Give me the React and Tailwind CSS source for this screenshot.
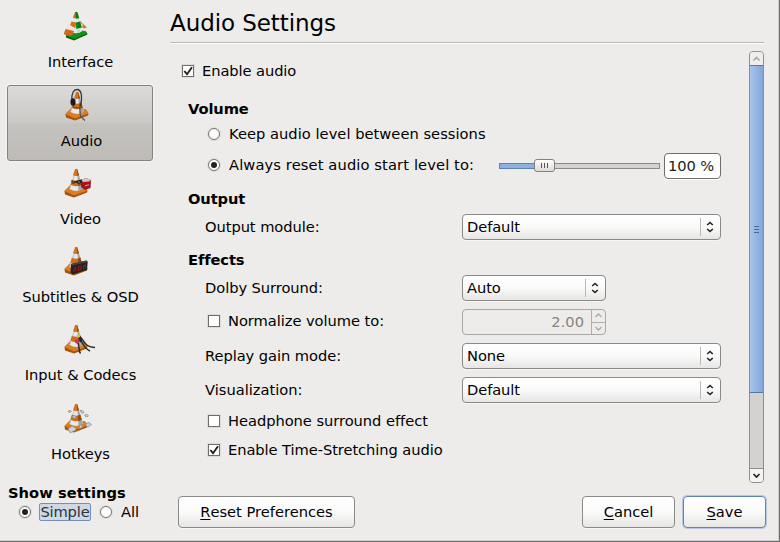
import React from "react";

const raised = "border border-[#8b8a88] rounded-[4px] bg-gradient-to-b from-white via-[#fafafa] to-[#e7e6e4] shadow-[0_1px_0_#f7f6f5]";

function Cone() {
  return (
    <g>
      <path d="M4.500 25 L10 19.500 L25 20.500 L27.500 24.500 L27 26.500 L14 31.500 L5 28.500Z" fill="#a3550c" />
      <path d="M4.500 25 L10 19.500 L25 20.500 L27.500 24.500 L14 29.500Z" fill="#dc7d1f" />
      <path d="M15 3.300 Q16 2.300 17.200 3.300 L23 22.500 Q17 27 9.500 23Z" fill="#e6e8ec" />
      <path d="M17 3.200 L17.200 3.300 L23 22.500 Q21 24.500 18.500 25Z" fill="#a3a6ac" />
      <path d="M14.600 9 L12.200 15 M11 18.500 L9.700 23" stroke="#b3b6bb" strokeWidth=".8" />
      <path d="M15 3.300 Q16 2.300 17.200 3.300 L18.900 9.300 Q16 10.800 13 9.300Z" fill="#cf7420" />
      <path d="M11.900 13.500 Q16 16 20.200 13.500 L21.700 18.700 Q16 21.500 10.300 18.800Z" fill="#cc6d17" />
      <path d="M16.800 3 L17.200 3.300 L18.900 9.300 L17.500 10Z M18 14.800 L20.200 13.500 L21.700 18.700 L18.300 20.200Z" fill="#94490a" />
    </g>
  );
}

function InterfaceIcon() {
  return (
    <>
      <path d="M19 11 L27 18.500 L24 19.500 L20 17Z" fill="#d97734" />
      <path d="M20 13 L23 16 L22 18 L20 17Z" fill="#e9e4df" />
      <path d="M6 26 L15 20 L26 22.500 L27.500 25.500 L14 31.500 L6 28.500Z" fill="#075f0c" />
      <path d="M6 26 L15 20 L26 22.500 L27.500 24.500 L14 30Z" fill="#129119" />
      <path d="M15 3.300 Q16.300 2.300 17.500 3.300 L22.500 22 Q17 26 11 23Z" fill="#e3e7e4" />
      <path d="M15 3.300 L16.200 2.700 L16 9.300 L12.800 8.800Z" fill="#cf7024" />
      <path d="M15.500 2.700 L17.500 3.300 L19.300 9.300 L15.800 9.800Z M16 13.500 L20.200 12.500 L21.800 18.500 L16.300 20Z" fill="#087f12" />
      <path d="M11.500 12.500 L16.200 13.500 L15.500 19 L9.700 17Z" fill="#d66f1b" />
      <path d="M8.500 15 L14 18.500 L14 23 L5.500 22Z" fill="#e9e4e0" />
      <path d="M5.500 20 L14 22 L12.500 26.500 L8 27 L3.800 25Z" fill="#cb681b" />
      <path d="M17.500 20 L19.500 19.500 L20.500 23 L17 24Z" fill="#c9d6ca" />
    </>
  );
}

function AudioIcon() {
  return (
    <>
      <g transform="translate(0 1)"><Cone /></g>
      <path d="M11 13 C10 5 13 1.500 16 1.500 C21 1.500 21.500 10 19.500 18" fill="none" stroke="#34373a" strokeWidth="1.300" />
      <ellipse cx="12" cy="14" rx="2.600" ry="3.800" fill="#171c20" />
      <path d="M12 17.500 C13 22 17 19 18.500 20 C20 22 18 26 20 29 L24 32.500" fill="none" stroke="#4a4b4c" strokeWidth="1.100" />
    </>
  );
}

function VideoIcon() {
  return (
    <>
      <Cone />
      <path d="M21 14 L26 12 L31 14 L30.500 22 L25 24 L21 21Z" fill="#a5121d" />
      <path d="M21 14 L26 12 L31 14 L29 15.500 L23 16Z" fill="#d3c6c8" />
      <path d="M25 19.800 L29 18.800" stroke="#d99aa1" strokeWidth="1.100" />
      <path d="M11 14.500 L15 15 L22 13.500 L22 16.500 L18.500 18 L16 16.500 L13 18Z" fill="#292521" />
      <path d="M12.500 16H14.500 M18 16H20" stroke="#c98022" />
    </>
  );
}

function SubtitlesIcon() {
  return (
    <>
      <Cone />
      <path d="M11 20 L26.500 16.500 L27.700 18 L27 26 L12.500 30.500 L10.500 28.500Z" fill="#242323" />
      <path d="M11 20 L26.500 16.500 L27.700 18 L12 21.500Z" fill="#484545" />
      <path d="M13.500 28 L15 23.500 L16.500 27.200 M18.500 26.500 V22.800 L21 22.200 V25.800 L18.500 26.500 M23.500 25 V21.500 L25.500 21 V24.500" fill="none" stroke="#96191c" strokeWidth="1" />
    </>
  );
}

function CodecsIcon() {
  return (
    <>
      <Cone />
      <path d="M19 14 C24 17 24 25.500 35 25.500 M19 16 C23 20 23 26 30 29 M17.500 20 C20 24 18 28 20.500 31.500" fill="none" stroke="#292729" strokeWidth="1.500" />
      <circle cx="18.500" cy="14" r="1.800" fill="#d7cb16" />
      <circle cx="16.800" cy="19.500" r="1.900" fill="#d6266d" />
      <path d="M19.500 15.500 L21.500 20" stroke="#292729" strokeWidth="2" />
    </>
  );
}

function HotkeysIcon() {
  return (
    <>
      <Cone />
      <g fill="#d0d0cf" stroke="#868684" strokeWidth=".7">
        <path d="M8 10 L10.500 9.500 L11.500 10.500 L9 11.500Z M20 9.500 L22.500 9.500 L24 11.500 L22 12.500Z M24.500 14 L27 13.300 L28.500 15 L26 16Z M12 15.500 L14 14.500 L16.500 16 L14 17.500Z" />
        <path d="M8 28 L12 25 L16 27 L15.500 29.500 L10 31.800Z M19 24.500 L21 24 L23 26 L20 27.500Z M26 22.500 L29 21.500 L31.500 23.500 L28 26 L26 25Z" />
      </g>
    </>
  );
}

function Check({ on }) {
  return (
    <span className="flex size-[12px] shrink-0 border border-[#6e6d6b] bg-white shadow-[0_0_0_1px_#dddcda]">
      {on && (
        <svg className="size-[10px]" viewBox="0 0 10 10">
          <path d="M1.300 5 L4 8.200 L9 1.200" fill="none" stroke="#222" strokeWidth="1.900" />
        </svg>
      )}
    </span>
  );
}

function Radio({ on }) {
  return (
    <span className="flex size-[12px] shrink-0 items-center justify-center rounded-full border border-[#767573] bg-white shadow-[0_0_0_1px_#dddcda]">
      {on && <span className="size-[6px] rounded-full bg-[#222]" />}
    </span>
  );
}

function Select({ value, className }) {
  return (
    <div className={`flex h-[26px] items-center pl-1 ${raised} ${className}`}>
      <span className="flex-1 tracking-[-0.080px]">{value}</span>
      <span className="h-[18px] w-px bg-[#bab9b7]" />
      <svg className="h-[12px] w-[19px]" viewBox="0 0 19 12">
        <path d="M6.200 4 L9 1.500 L11.800 4 M6.200 8 L9 10.500 L11.800 8" fill="none" stroke="#222" strokeWidth="1.600" />
      </svg>
    </div>
  );
}

function Item({ label, icon, active, className = "" }) {
  return (
    <div
      className={`flex h-[76px] w-[146px] shrink-0 flex-col items-center rounded-[3px] border ${active ? "border-[#84837f] bg-[linear-gradient(#dbdad8,#cccac7_49%,#c5c3bf_51%,#bfbcb8)] pl-[2px] shadow-[0_0_0_1px_#f4f3f2]" : "border-transparent"} ${className}`}
    >
      <svg className="mr-[6px] mt-[2px] size-[34px] overflow-visible" viewBox="0 0 34 34">{icon}</svg>
      <span className="mt-[9px] pl-px leading-[20px] tracking-[-0.030px]">{label}</span>
    </div>
  );
}

const Head = ({ children, className }) => (
  <div className={`flex h-6 items-center font-bold tracking-[-0.100px] ${className}`}>{children}</div>
);

export default function App() {
  return (
    <div className="flex h-[542px] w-[780px] overflow-hidden whitespace-nowrap border-b border-r border-[#6f6e6c] bg-[#edecea] font-['DejaVu_Sans',sans-serif] text-[14.670px] leading-[20px] text-black shadow-[inset_-1px_-1px_0_#cfcecc]">
      <aside className="flex w-[170px] shrink-0 flex-col pl-[7px] pt-[6px]">
        <Item label="Interface" icon={<InterfaceIcon />} className="mb-[3px]" />
        <Item label="Audio" icon={<AudioIcon />} active className="mb-[2px]" />
        <Item label="Video" icon={<VideoIcon />} className="mb-[2px]" />
        <Item label="Subtitles & OSD" icon={<SubtitlesIcon />} className="mb-[2px]" />
        <Item label="Input & Codecs" icon={<CodecsIcon />} className="mb-[3px]" />
        <Item label="Hotkeys" icon={<HotkeysIcon />} />
        <div className="mt-[9px] pl-px font-bold tracking-[0.060px]">Show settings</div>
        <div className="flex h-[18px] items-center pl-[12px]">
          <Radio on />
          <span className="ml-[8px] flex h-[18px] w-[52px] items-center justify-center rounded-[2px] border border-[#7390b9] bg-[#d0d8e3] tracking-[-0.150px] text-[#2b3340]">Simple</span>
          <span className="ml-[9px] flex"><Radio /></span>
          <span className="ml-[9px]">All</span>
        </div>
      </aside>

      <main className="flex w-[609px] flex-col">
        <h1 className="flex h-[42px] items-center pt-[4px] text-[23px] tracking-[-0.080px]">Audio Settings</h1>
        <div className="h-[2px] w-[594px] border-b border-t border-b-white border-t-[#b9b8b6]" />
        <div className="flex h-[439px] pt-[7px]">
          <div className="w-[579px] pt-[7px]">
            <div className="flex h-[26px] items-center pl-[12px]">
              <Check on />
              <span className="ml-[8px] tracking-[-0.080px]">Enable audio</span>
            </div>
            <div className="pl-[18px]">
              <Head className="mt-[13px]">Volume</Head>
              <div className="mt-px flex h-6 items-center pl-[20px]">
                <Radio />
                <span className="ml-[9px] tracking-[0.030px]">Keep audio level between sessions</span>
              </div>
              <div className="mt-[6px] flex h-[27px] items-center pl-[20px]">
                <span className="-mt-[2px] flex"><Radio on /></span>
                <span className="-mt-[2px] ml-[9px] w-[270px] tracking-[0.120px]">Always reset audio start level to:</span>
                <div className="flex w-[161px] items-center">
                  <div className="h-[6px] w-[35px] border border-r-0 border-[#5f82b5] bg-[#8db0de]" />
                  <div className="flex h-[13px] w-[21px] items-center justify-center gap-[2px] rounded-[3px] border border-[#82817f] bg-gradient-to-b from-white to-[#dcdbd9]">
                    <i className="h-[5px] w-px bg-[#555]" />
                    <i className="h-[5px] w-px bg-[#555]" />
                    <i className="h-[5px] w-px bg-[#555]" />
                  </div>
                  <div className="h-[6px] flex-1 border border-l-0 border-[#8c8b89] bg-[#d5d3d0]" />
                </div>
                <div className="ml-[4px] flex h-[26px] w-[57px] items-center rounded-[4px] border border-[#716f6d] bg-white pl-[3px] tracking-[-0.100px] text-[#222] shadow-[0_1px_0_#fff]">100 %</div>
              </div>
              <Head className="mt-[8px]">Output</Head>
              <div className="mt-[3px] flex items-center pl-[17px]">
                <span className="w-[257px] tracking-[-0.060px]">Output module:</span>
                <Select value="Default" className="w-[259px]" />
              </div>
              <Head className="mt-[8px]">Effects</Head>
              <div className="mt-[3px] flex items-center pl-[17px]">
                <span className="w-[257px] tracking-[-0.060px]">Dolby Surround:</span>
                <Select value="Auto" className="w-[144px]" />
              </div>
              <div className="mt-[8px] flex items-center pl-[20px]">
                <span className="-mt-[2px] flex"><Check /></span>
                <span className="-mt-[2px] ml-[8px] w-[234px] tracking-[-0.050px]">Normalize volume to:</span>
                <div className="flex h-[26px] w-[144px] overflow-hidden rounded-[4px] border border-[#a9a8a6] text-[#858482]">
                  <span className="flex-1 self-center pr-[7px] text-right">2.00</span>
                  <div className="flex w-[14px] flex-col border-l border-[#b0afad]">
                    <svg className="h-[12px] w-[13px]" viewBox="0 0 13 12"><path d="M3.500 7 L6.500 4 L9.500 7" fill="none" stroke="#aaa9a7" strokeWidth="1.300" /></svg>
                    <svg className="h-[12px] w-[13px] border-t border-[#b0afad]" viewBox="0 0 13 11"><path d="M3.500 4 L6.500 7 L9.500 4" fill="none" stroke="#aaa9a7" strokeWidth="1.300" /></svg>
                  </div>
                </div>
              </div>
              <div className="mt-[8px] flex items-center pl-[17px]">
                <span className="w-[257px] tracking-[-0.060px]">Replay gain mode:</span>
                <Select value="None" className="w-[259px]" />
              </div>
              <div className="mt-[8px] flex items-center pl-[17px]">
                <span className="w-[257px]">Visualization:</span>
                <Select value="Default" className="w-[259px]" />
              </div>
              <div className="mt-[6px] flex h-6 items-center pl-[20px]">
                <Check />
                <span className="ml-[8px] tracking-[-0.040px]">Headphone surround effect</span>
              </div>
              <div className="mt-[5px] flex h-6 items-center pl-[20px]">
                <Check on />
                <span className="ml-[8px] tracking-[-0.070px]">Enable Time-Stretching audio</span>
              </div>
            </div>
          </div>
          <div className="flex h-[432px] w-[15px] flex-col overflow-hidden rounded-[4px] border border-[#8f8e8c] bg-[#d3d2d0]">
            <svg className="h-[13px] w-[13px] bg-[#efeeec]" viewBox="0 0 13 13"><path d="M3.500 8.500 L6.500 5.500 L9.500 8.500" fill="none" stroke="#a8a7a5" strokeWidth="1.600" /></svg>
            <div className="-mx-px flex h-[328px] shrink-0 flex-col items-center justify-center gap-[2px] border border-[#5877a5] bg-gradient-to-r from-[#a9c4ea] to-[#81a5da]">
              <i className="h-px w-[5px] bg-[#47699c]" />
              <i className="h-px w-[5px] bg-[#47699c]" />
              <i className="h-px w-[5px] bg-[#47699c]" />
            </div>
            <svg className="mt-auto h-[14px] w-[13px] border-t border-[#8f8e8c] bg-[#f5f4f3]" viewBox="0 0 13 13"><path d="M3.500 5 L6.500 8 L9.500 5" fill="none" stroke="#222" strokeWidth="1.700" /></svg>
          </div>
        </div>
        <div className="flex pl-[8px] pt-[13px]">
          <div className={`flex h-[32px] w-[177px] items-center justify-center ${raised}`}><span className="underline underline-offset-2">R</span>eset Preferences</div>
          <div className={`ml-[227px] flex h-[32px] w-[93px] items-center justify-center ${raised}`}><span className="underline underline-offset-2">C</span>ancel</div>
          <div className="ml-[8px] flex h-[32px] w-[83px] items-center justify-center rounded-[4px] border border-[#6283b5] bg-gradient-to-b from-white via-[#fafafa] to-[#e7e6e4] shadow-[0_0_0_1px_#b9c8de]"><span className="underline underline-offset-2">S</span>ave</div>
        </div>
      </main>
    </div>
  );
}
